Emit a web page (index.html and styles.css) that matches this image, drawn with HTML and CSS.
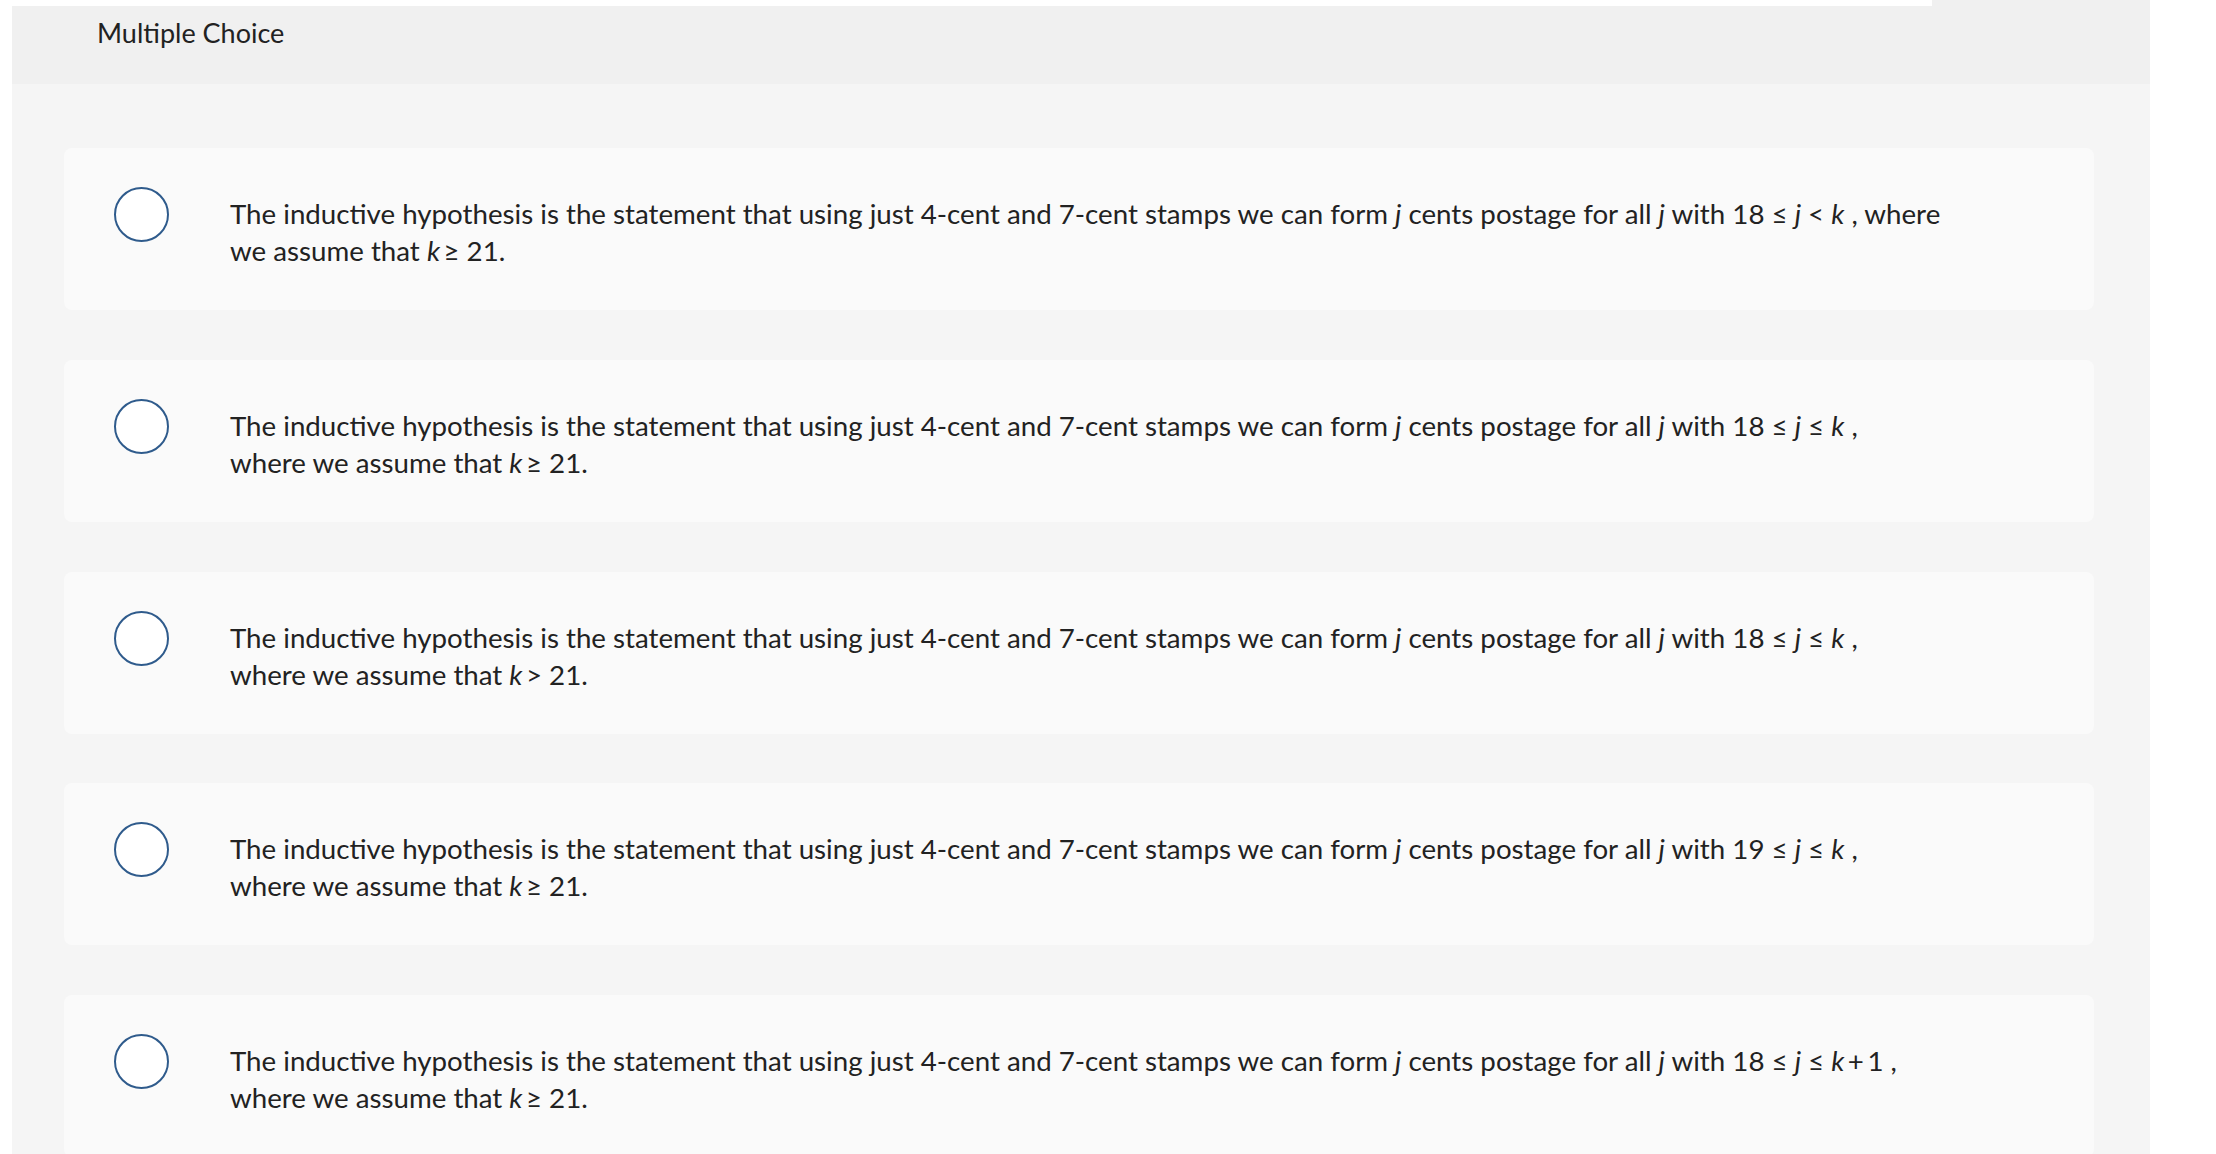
FILE: index.html
```html
<!DOCTYPE html>
<html lang="en">
<head>
<meta charset="utf-8">
<title>Multiple Choice</title>
<link rel="stylesheet" href="styles.css">
</head>
<body>
<div class="topline"><div class="topline-white"></div></div>
<main class="panel">
  <header class="panel-head">
    <h2 class="title">Multiple Choice</h2>
  </header>
  <section class="choices">
    <div class="choice">
      <span class="radio"></span>
      <p class="choice-text">The inductive hypothesis is the statement that using just 4-cent and 7-cent stamps we can form <i>j</i> cents postage for all <i>j</i> with 18 ≤ <i>j</i> &lt; <i>k</i> , where<br>we assume that <i>k</i>&thinsp;≥ 21.</p>
    </div>
    <div class="choice">
      <span class="radio"></span>
      <p class="choice-text">The inductive hypothesis is the statement that using just 4-cent and 7-cent stamps we can form <i>j</i> cents postage for all <i>j</i> with 18 ≤ <i>j</i> ≤ <i>k</i> ,<br>where we assume that <i>k</i>&thinsp;≥ 21.</p>
    </div>
    <div class="choice">
      <span class="radio"></span>
      <p class="choice-text">The inductive hypothesis is the statement that using just 4-cent and 7-cent stamps we can form <i>j</i> cents postage for all <i>j</i> with 18 ≤ <i>j</i> ≤ <i>k</i> ,<br>where we assume that <i>k</i>&thinsp;&gt; 21.</p>
    </div>
    <div class="choice">
      <span class="radio"></span>
      <p class="choice-text">The inductive hypothesis is the statement that using just 4-cent and 7-cent stamps we can form <i>j</i> cents postage for all <i>j</i> with 19 ≤ <i>j</i> ≤ <i>k</i> ,<br>where we assume that <i>k</i>&thinsp;≥ 21.</p>
    </div>
    <div class="choice">
      <span class="radio"></span>
      <p class="choice-text">The inductive hypothesis is the statement that using just 4-cent and 7-cent stamps we can form <i>j</i> cents postage for all <i>j</i> with 18 ≤ <i>j</i> ≤ <i>k</i>&thinsp;+&thinsp;1 ,<br>where we assume that <i>k</i>&thinsp;≥ 21.</p>
    </div>
  </section>
</main>
</body>
</html>
```
FILE: styles.css
```css
html, body {
  margin: 0;
  padding: 0;
  background: #ffffff;
}
body {
  font-family: "Lato", "Noto Sans", sans-serif;
  color: #242424;
  overflow: hidden;
  height: 1154px;
  position: relative;
}
.topline {
  position: absolute;
  top: 0;
  left: 12px;
  width: 1920px;
  height: 6px;
  z-index: 2;
}
.topline-white {
  width: 100%;
  height: 100%;
  background: #ffffff;
}
.panel {
  margin-left: 12px;
  width: 2138px;
  background: #f5f5f5;
  min-height: 1154px;
}
.panel-head {
  background: #f0f0f0;
  height: 84px;
  box-sizing: border-box;
  padding: 17px 0 0 85px;
}
.title {
  margin: 0;
  font-weight: 400;
  font-size: 27px;
  line-height: 32px;
  color: #222222;
}
.choices {
  padding: 64px 56px 0 52px;
  display: flex;
  flex-direction: column;
  gap: 49.75px;
}
.choice {
  background: #fafafa;
  border-radius: 8px;
  display: flex;
  align-items: flex-start;
  padding: 39px 0 0 50px;
  height: 162px;
  box-sizing: border-box;
}
.radio {
  flex: none;
  width: 55px;
  height: 55px;
  box-sizing: border-box;
  border: 2px solid #2f5b8c;
  border-radius: 50%;
  background: #ffffff;
}
.choice-text {
  margin: 8px 0 0 61px;
  font-size: 27.7px;
  line-height: 37px;
  white-space: nowrap;
  color: #222222;
}
.choice-text i {
  font-style: italic;
}
```
